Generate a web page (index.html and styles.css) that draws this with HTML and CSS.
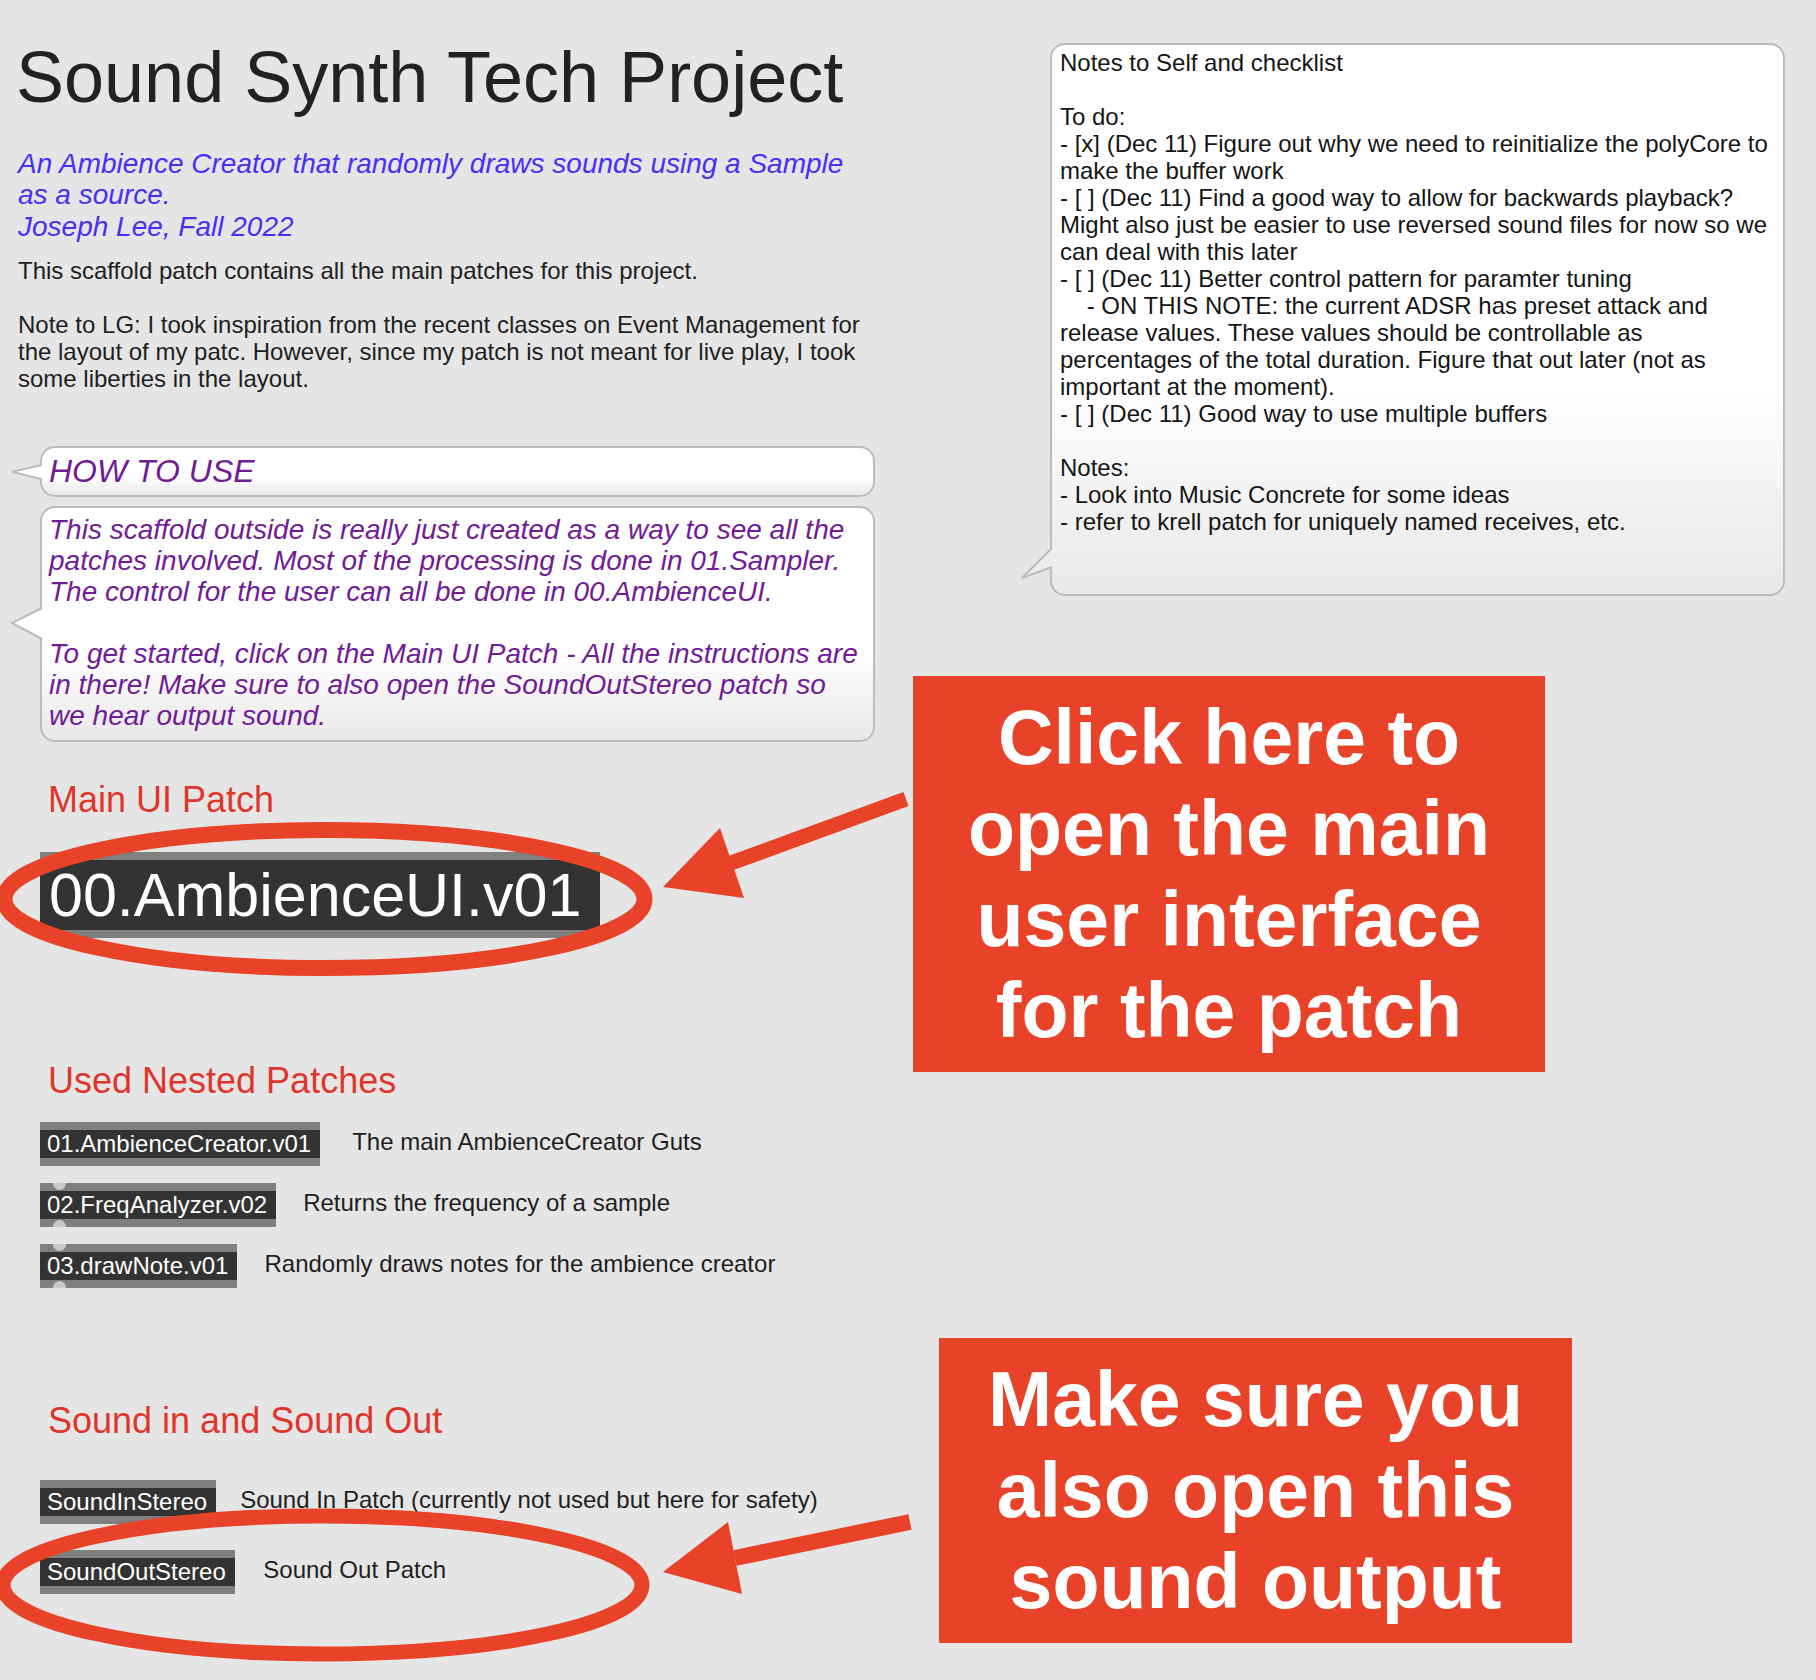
FILE: index.html
```html
<!DOCTYPE html>
<html lang="en">
<head>
<meta charset="utf-8">
<title>Sound Synth Tech Project</title>
<link rel="stylesheet" href="styles.css">
</head>
<body>
<div class="page">
  <div class="col-left">
    <h1 class="title">Sound Synth Tech Project</h1>
    <p class="subtitle">An Ambience Creator that randomly draws sounds using a Sample<br>as a source.<br>Joseph Lee, Fall 2022</p>
    <p class="intro">This scaffold patch contains all the main patches for this project.<br><br>Note to LG: I took inspiration from the recent classes on Event Management for<br>the layout of my patc. However, since my patch is not meant for live play, I took<br>some liberties in the layout.</p>

    <div class="bubble how-head">
      <svg class="tail tail-head" width="36" height="24" viewBox="0 0 36 24">
        <polygon points="2,10.7 32,4 35,4 35,18.3 32,18.3" fill="#ffffff"/>
        <polyline points="32,4 2,10.7 32,18.3" fill="none" stroke="#bcbcbc" stroke-width="2" stroke-linejoin="miter"/>
      </svg>
      <p class="how-title">HOW TO USE</p>
    </div>
    <div class="bubble how-body">
      <svg class="tail tail-body" width="36" height="40" viewBox="0 0 36 40">
        <polygon points="2,19 32,4 35,4 35,35 32,35" fill="#ffffff"/>
        <polyline points="32,4 2,19 32,35" fill="none" stroke="#bcbcbc" stroke-width="2"/>
      </svg>
      <p class="how-text">This scaffold outside is really just created as a way to see all the<br>patches involved. Most of the processing is done in 01.Sampler.<br>The control for the user can all be done in 00.AmbienceUI.<br><br>To get started, click on the Main UI Patch - All the instructions are<br>in there! Make sure to also open the SoundOutStereo patch so<br>we hear output sound.</p>
    </div>

    <h2 class="section section-main">Main UI Patch</h2>
    <div class="patch patch-large">00.AmbienceUI.v01</div>

    <h2 class="section section-nested">Used Nested Patches</h2>
    <ul class="patch-list nested-list">
      <li class="patch-row gap-wide"><span class="patch">01.AmbienceCreator.v01</span><span class="desc">The main AmbienceCreator Guts</span></li>
      <li class="patch-row"><span class="patch"><span class="port port-in"></span>02.FreqAnalyzer.v02<span class="port port-out"></span></span><span class="desc">Returns the frequency of a sample</span></li>
      <li class="patch-row"><span class="patch"><span class="port port-in"></span>03.drawNote.v01<span class="port port-out"></span></span><span class="desc">Randomly draws notes for the ambience creator</span></li>
    </ul>

    <h2 class="section section-io">Sound in and Sound Out</h2>
    <ul class="patch-list io-list">
      <li class="patch-row gap-narrow"><span class="patch">SoundInStereo</span><span class="desc">Sound In Patch (currently not used but here for safety)</span></li>
      <li class="patch-row gap-mid"><span class="patch">SoundOutStereo</span><span class="desc">Sound Out Patch</span></li>
    </ul>
  </div>

  <div class="col-right">
    <div class="bubble notes">
      <svg class="tail tail-notes" width="36" height="38" viewBox="0 0 36 38">
        <polygon points="2,34 32,4 35,4 35,23 32,23" fill="#ededed"/>
        <polyline points="32,4 2,34 32,23" fill="none" stroke="#bcbcbc" stroke-width="2"/>
      </svg>
      <p class="notes-text">Notes to Self and checklist<br><br>To do:<br>- [x] (Dec 11) Figure out why we need to reinitialize the polyCore to<br>make the buffer work<br>- [ ] (Dec 11) Find a good way to allow for backwards playback?<br>Might also just be easier to use reversed sound files for now so we<br>can deal with this later<br>- [ ] (Dec 11) Better control pattern for paramter tuning<br>&nbsp;&nbsp;&nbsp;&nbsp;- ON THIS NOTE: the current ADSR has preset attack and<br>release values. These values should be controllable as<br>percentages of the total duration. Figure that out later (not as<br>important at the moment).<br>- [ ] (Dec 11) Good way to use multiple buffers<br><br>Notes:<br>- Look into Music Concrete for some ideas<br>- refer to krell patch for uniquely named receives, etc.</p>
    </div>
    <div class="callout callout-main">Click here to<br>open the main<br>user interface<br>for the patch</div>
    <div class="callout callout-out">Make sure you<br>also open this<br>sound output</div>
  </div>

  <svg class="annotations" width="1816" height="1680" viewBox="0 0 1816 1680">
    <ellipse cx="324.5" cy="899" rx="320" ry="69" fill="none" stroke="#e84229" stroke-width="16"/>
    <line x1="906" y1="799" x2="731" y2="863" stroke="#e84229" stroke-width="15"/>
    <polygon points="663,887 720,828 744,898" fill="#e84229"/>
    <ellipse cx="322.5" cy="1585" rx="319.5" ry="69" fill="none" stroke="#e84229" stroke-width="15"/>
    <line x1="910" y1="1522" x2="735" y2="1558" stroke="#e84229" stroke-width="16"/>
    <polygon points="663,1572 728,1522 742,1594" fill="#e84229"/>
  </svg>
</div>
</body>
</html>
```
FILE: styles.css
```css
* {
  box-sizing: border-box;
  margin: 0;
  padding: 0;
}

html,
body {
  background: #e5e5e5;
}

body {
  width: 1816px;
  height: 1680px;
  overflow: hidden;
  font-family: "Liberation Sans", Arial, sans-serif;
  color: #222;
}

.page {
  position: relative;
  display: flex;
  width: 1816px;
  height: 1680px;
}

/* ---------- left column ---------- */
.col-left {
  flex: none;
  width: 913px;
  padding-top: 37px;
}

.title {
  padding-left: 16px;
  font-size: 72px;
  line-height: 80px;
  font-weight: normal;
  color: #222;
  white-space: nowrap;
}

.subtitle {
  margin-top: 30.5px;
  padding-left: 18px;
  font-size: 28px;
  line-height: 31.5px;
  font-style: italic;
  color: #4b2ef2;
  white-space: nowrap;
}

.intro {
  margin-top: 15px;
  padding-left: 18px;
  font-size: 24px;
  line-height: 27px;
  color: #1e1e1e;
  white-space: nowrap;
}

/* ---------- comment bubbles ---------- */
.bubble {
  position: relative;
  border: 2px solid #bcbcbc;
  border-radius: 15px;
  background: linear-gradient(to bottom, #ffffff 0%, #ffffff 62%, #e8e8e8 100%);
}

.tail {
  position: absolute;
  left: -32px;
  display: block;
  overflow: visible;
}

.tail-head {
  top: 13px;
}

.tail-body {
  top: 96px;
}

.tail-notes {
  top: 499px;
}

.how-head {
  width: 835px;
  height: 51px;
  margin: 54px 0 0 40px;
  padding: 4.6px 0 0 7px;
}

.how-title {
  font-size: 32px;
  line-height: 36px;
  font-style: italic;
  color: #711c96;
  white-space: nowrap;
}

.how-body {
  width: 835px;
  height: 236px;
  margin: 9px 0 0 40px;
  padding: 6px 0 0 7px;
}

.how-text {
  font-size: 28px;
  line-height: 31px;
  font-style: italic;
  color: #711c96;
  white-space: nowrap;
}

/* ---------- section headings ---------- */
.section {
  padding-left: 48px;
  font-size: 36px;
  line-height: 41px;
  font-weight: normal;
  color: #e0352b;
  white-space: nowrap;
}

.section-main {
  margin-top: 36.7px;
}

.section-nested {
  margin-top: 122px;
}

.section-io {
  margin-top: 112.5px;
}

/* ---------- patcher objects ---------- */
.patch {
  position: relative;
  display: inline-block;
  flex: none;
  padding: 0 9px 0 7px;
  border-top: 8px solid #808080;
  border-bottom: 8px solid #808080;
  background: #333333;
  color: #ffffff;
  font-size: 24px;
  line-height: 27.5px;
  white-space: nowrap;
}

.patch-large {
  display: block;
  width: 560px;
  margin: 32.3px 0 0 40px;
  padding: 0 0 0 9px;
  font-size: 61px;
  line-height: 70px;
}

.port {
  position: absolute;
  left: 13px;
  width: 13px;
  background: #c9c9c9;
}

.port-in {
  top: -8px;
  height: 7px;
  border-radius: 0 0 7px 7px;
}

.port-out {
  bottom: -8px;
  height: 6.5px;
  border-radius: 7px 7px 0 0;
}

.patch-list {
  list-style: none;
  display: flex;
  flex-direction: column;
  align-items: flex-start;
  margin-left: 40px;
}

.nested-list {
  margin-top: 21.3px;
  gap: 17.5px;
}

.io-list {
  margin-top: 39px;
  gap: 26.5px;
}

.patch-row {
  display: flex;
  align-items: flex-start;
  gap: 27px;
}

.gap-wide {
  gap: 32px;
}

.gap-narrow {
  gap: 24px;
}

.gap-mid {
  gap: 28.5px;
}

.desc {
  margin-top: 6px;
  font-size: 24px;
  line-height: 27px;
  color: #1e1e1e;
  white-space: nowrap;
}

/* ---------- right column ---------- */
.col-right {
  flex: none;
  width: 903px;
  display: flex;
  flex-direction: column;
  align-items: flex-start;
}

.notes {
  width: 735px;
  height: 553px;
  margin: 43px 0 0 137px;
  padding: 4px 0 0 8px;
}

.notes-text {
  font-size: 24px;
  line-height: 27px;
  color: #151515;
  white-space: nowrap;
}

.callout {
  background: #e84229;
  color: #ffffff;
  font-size: 77px;
  line-height: 91px;
  font-weight: bold;
  text-align: center;
  white-space: nowrap;
}

.callout-main {
  width: 632px;
  height: 396px;
  margin-top: 80px;
  padding-top: 16px;
}

.callout-out {
  width: 633px;
  height: 305px;
  margin: 266px 0 0 26px;
  padding-top: 16px;
}

/* ---------- hand-drawn annotations overlay ---------- */
.annotations {
  position: absolute;
  left: 0;
  top: 0;
  pointer-events: none;
}
```
